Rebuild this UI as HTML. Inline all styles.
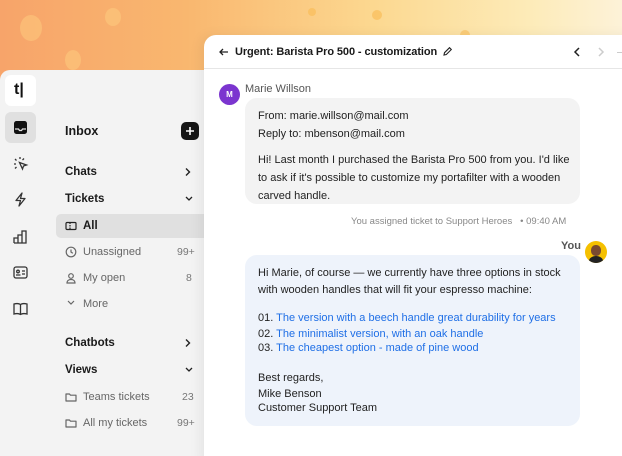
<!DOCTYPE html>
<html><head><meta charset="utf-8"><style>
*{margin:0;padding:0;box-sizing:border-box}
html,body{width:622px;height:456px;overflow:hidden}
body{position:relative;font-family:"Liberation Sans",sans-serif;background:linear-gradient(90deg,#f7a46a 0%,#f9b76f 30%,#fcd890 60%,#fdebb8 85%,#fdf2d8 100%)}
.blob{position:absolute;border-radius:50%;background:rgba(255,210,130,.45)}
.left{position:absolute;left:0;top:70px;width:215px;height:400px;background:#f3f3f3;border-top-left-radius:10px}
.right{position:absolute;left:204px;top:35px;width:430px;height:430px;background:#fff;border-top-left-radius:12px;box-shadow:-4px 0 12px rgba(0,0,0,.06)}
.t{position:absolute;white-space:nowrap;font-size:11px;color:#222}
.b{font-weight:bold;font-size:11.5px;color:#1a1a1a}
.g{color:#666}
.n{color:#777;font-size:10.5px}
svg{position:absolute}
.lnk{color:#1f6fe6}
</style></head><body>
<div class="blob" style="left:20px;top:15px;width:22px;height:26px"></div>
<div class="blob" style="left:105px;top:8px;width:16px;height:18px"></div>
<div class="blob" style="left:65px;top:50px;width:16px;height:20px"></div>
<div class="blob" style="left:372px;top:10px;width:10px;height:10px;background:rgba(250,190,90,.7)"></div>
<div class="blob" style="left:308px;top:8px;width:8px;height:8px;background:rgba(250,190,90,.7)"></div>
<div class="blob" style="left:460px;top:30px;width:10px;height:10px;background:rgba(250,190,90,.6)"></div>

<div class="left"></div>
<div style="position:absolute;left:5px;top:75px;width:31px;height:31px;background:#fff;border-radius:6px"></div>
<div class="t" style="left:14px;top:81px;font-size:16px;font-weight:bold;color:#111">t|</div>
<div style="position:absolute;left:5px;top:112px;width:31px;height:31px;background:#e0e0e0;border-radius:6px"></div>
<svg style="left:12px;top:119px" width="17" height="17" viewBox="0 0 17 17"><rect x="2" y="2" width="13" height="13" rx="2.5" fill="#111"/><path d="M3 10h3.5l1 1.5h2l1-1.5H14" stroke="#e0e0e0" stroke-width="1.3" fill="none"/></svg>
<svg style="left:12px;top:155px" width="17" height="17" viewBox="0 0 17 17" stroke="#333" stroke-width="1.3" fill="none"><path d="M8 2v2M3 4l1.5 1.5M2 9h2M4.5 12L3 13.5M12 3.5l-1.5 1.5"/><path d="M7.5 7.5l7 2.5-3 1-1 3z"/></svg>
<svg style="left:12px;top:191px" width="17" height="17" viewBox="0 0 17 17"><path d="M10 2L4 9.5h4.5L7 15l6-7.5H8.5z" stroke="#333" stroke-width="1.3" fill="none" stroke-linejoin="round"/></svg>
<svg style="left:12px;top:228px" width="17" height="17" viewBox="0 0 17 17" stroke="#333" stroke-width="1.3" fill="none"><path d="M2 15V10h4v5M6 15V7h4v8M10 15V3h4v12zM2 15h12"/></svg>
<svg style="left:12px;top:264px" width="17" height="17" viewBox="0 0 17 17" stroke="#333" stroke-width="1.3" fill="none"><rect x="2" y="3" width="13" height="11" rx="2"/><circle cx="6" cy="7.5" r="1.3"/><path d="M4 11h4.5M10 7h3M10 10h3"/></svg>
<svg style="left:12px;top:300px" width="17" height="17" viewBox="0 0 17 17" stroke="#333" stroke-width="1.3" fill="none"><path d="M8.5 4.5C7 3.5 4 3.5 2 4v10c2-.5 5-.5 6.5.5 1.5-1 4.5-1 6.5-.5V4c-2-.5-5-.5-6.5.5zM8.5 4.5v10"/></svg>

<div class="t b" style="left:65px;top:124px;font-size:12.5px">Inbox</div>
<div style="position:absolute;left:181px;top:122px;width:18px;height:18px;background:#161616;border-radius:5px"></div>
<svg style="left:181px;top:122px" width="18" height="18"><path d="M9 5v8M5 9h8" stroke="#fff" stroke-width="1.6"/></svg>
<div class="t b" style="left:65px;top:166px">Chats</div>
<svg style="left:184px;top:167px" width="8" height="10"><path d="M2 1.5l3.5 3.5L2 8.5" stroke="#222" stroke-width="1.4" fill="none"/></svg>
<div class="t b" style="left:65px;top:193px">Tickets</div>
<svg style="left:184px;top:195px" width="10" height="8"><path d="M2 2l3 3 3-3" stroke="#222" stroke-width="1.3" fill="none"/></svg>
<div style="position:absolute;left:56px;top:214px;width:149px;height:24px;background:#e0e0e0;border-radius:5px 0 0 5px"></div>
<svg style="left:65px;top:220px" width="12" height="12" viewBox="0 0 12 12"><rect x="1" y="2.5" width="10" height="7" rx="1" stroke="#222" stroke-width="1.2" fill="none"/><path d="M5 2.5v7" stroke="#222" stroke-width="1.2" stroke-dasharray="1.5 1"/></svg>
<div class="t b" style="left:83px;top:220px">All</div>
<svg style="left:65px;top:246px" width="12" height="12" viewBox="0 0 12 12" stroke="#666" stroke-width="1.2" fill="none"><circle cx="6" cy="6" r="4.8"/><path d="M6 3.5V6l1.8 1.2"/></svg>
<div class="t g" style="left:83px;top:246px">Unassigned</div><div class="t n" style="left:177px;top:246px">99+</div>
<svg style="left:65px;top:272px" width="12" height="12" viewBox="0 0 12 12" stroke="#666" stroke-width="1.2" fill="none"><circle cx="6" cy="4" r="2.3"/><path d="M2 11c0-2.5 2-3.5 4-3.5s4 1 4 3.5z"/></svg>
<div class="t g" style="left:83px;top:272px">My open</div><div class="t n" style="left:186px;top:272px">8</div>
<svg style="left:66px;top:299px" width="10" height="8"><path d="M2 2l3 3 3-3" stroke="#666" stroke-width="1.2" fill="none"/></svg>
<div class="t g" style="left:83px;top:298px">More</div>
<div class="t b" style="left:65px;top:337px">Chatbots</div>
<svg style="left:184px;top:338px" width="8" height="10"><path d="M2 1.5l3.5 3.5L2 8.5" stroke="#222" stroke-width="1.4" fill="none"/></svg>
<div class="t b" style="left:65px;top:364px">Views</div>
<svg style="left:184px;top:366px" width="10" height="8"><path d="M2 2l3 3 3-3" stroke="#222" stroke-width="1.3" fill="none"/></svg>
<svg style="left:65px;top:391px" width="12" height="12" viewBox="0 0 12 12"><path d="M1 3h3.5l1 1.2H11v5.8H1z" stroke="#666" stroke-width="1.2" fill="none" stroke-linejoin="round"/></svg>
<div class="t g" style="left:83px;top:391px">Teams tickets</div><div class="t n" style="left:182px;top:391px">23</div>
<svg style="left:65px;top:417px" width="12" height="12" viewBox="0 0 12 12"><path d="M1 3h3.5l1 1.2H11v5.8H1z" stroke="#666" stroke-width="1.2" fill="none" stroke-linejoin="round"/></svg>
<div class="t g" style="left:83px;top:417px">All my tickets</div><div class="t n" style="left:177px;top:417px">99+</div>

<div class="right"></div>
<div style="position:absolute;left:204px;top:68px;width:418px;height:1px;background:#e6e6e6"></div>
<svg style="left:218px;top:46px" width="12" height="12" viewBox="0 0 12 12" stroke="#222" stroke-width="1.3" fill="none"><path d="M10 6H2M5 3L2 6l3 3"/></svg>
<div class="t b" style="left:235px;top:46px;font-size:11px;letter-spacing:-0.1px">Urgent: Barista Pro 500 - customization</div>
<svg style="left:442px;top:46px" width="11" height="11" viewBox="0 0 11 11" stroke="#222" stroke-width="1.1" fill="none"><path d="M2 9l.5-2.3L7.5 1.7l1.8 1.8-5 5z"/></svg>
<svg style="left:572px;top:46px" width="10" height="12"><path d="M7 2L3 6l4 4" stroke="#222" stroke-width="1.5" fill="none"/></svg>
<svg style="left:596px;top:46px" width="10" height="12"><path d="M3 2l4 4-4 4" stroke="#ccc" stroke-width="1.5" fill="none"/></svg>
<div style="position:absolute;left:617px;top:52px;width:5px;height:1px;background:#ccc"></div>

<div style="position:absolute;left:219px;top:84px;width:21px;height:21px;border-radius:50%;background:#7b35cf;color:#fff;font-size:8px;font-weight:bold;text-align:center;line-height:21px">M</div>
<div class="t" style="left:245px;top:83px;color:#555;font-size:11px">Marie Willson</div>
<div style="position:absolute;left:245px;top:98px;width:335px;height:106px;background:#f3f3f3;border-radius:12px"></div>
<div class="t" style="left:258px;top:110px">From: marie.willson@mail.com</div>
<div class="t" style="left:258px;top:128px">Reply to: mbenson@mail.com</div>
<div class="t" style="left:258px;top:151px;line-height:18px;white-space:normal;width:320px">Hi! Last month I purchased the Barista Pro 500 from you. I'd like to ask if it's possible to customize my portafilter with a wooden carved handle.</div>

<div class="t" style="left:351px;top:216px;color:#888;font-size:9.5px">You assigned ticket to Support Heroes &nbsp; • 09:40 AM</div>
<div class="t" style="left:561px;top:240px;color:#555;font-size:11px;font-weight:bold">You</div>
<div style="position:absolute;left:585px;top:241px;width:22px;height:22px;border-radius:50%;background:#f5c000;overflow:hidden"><div style="position:absolute;left:6px;top:4px;width:10px;height:11px;border-radius:45%;background:#7a4a30"></div><div style="position:absolute;left:4px;top:15px;width:14px;height:10px;border-radius:50%;background:#222"></div></div>
<div style="position:absolute;left:245px;top:255px;width:335px;height:171px;background:#eef3fb;border-radius:12px"></div>
<div class="t" style="left:258px;top:265px;line-height:17px">Hi Marie, of course — we currently have three options in stock<br>with wooden handles that will fit your espresso machine:</div>
<div class="t" style="left:258px;top:312px">01. <span class="lnk">The version with a beech handle great durability for years</span></div>
<div class="t" style="left:258px;top:328px">02. <span class="lnk">The minimalist version, with an oak handle</span></div>
<div class="t" style="left:258px;top:342px">03. <span class="lnk">The cheapest option - made of pine wood</span></div>
<div class="t" style="left:258px;top:372px">Best regards,</div>
<div class="t" style="left:258px;top:388px">Mike Benson</div>
<div class="t" style="left:258px;top:402px">Customer Support Team</div>
</body></html>
